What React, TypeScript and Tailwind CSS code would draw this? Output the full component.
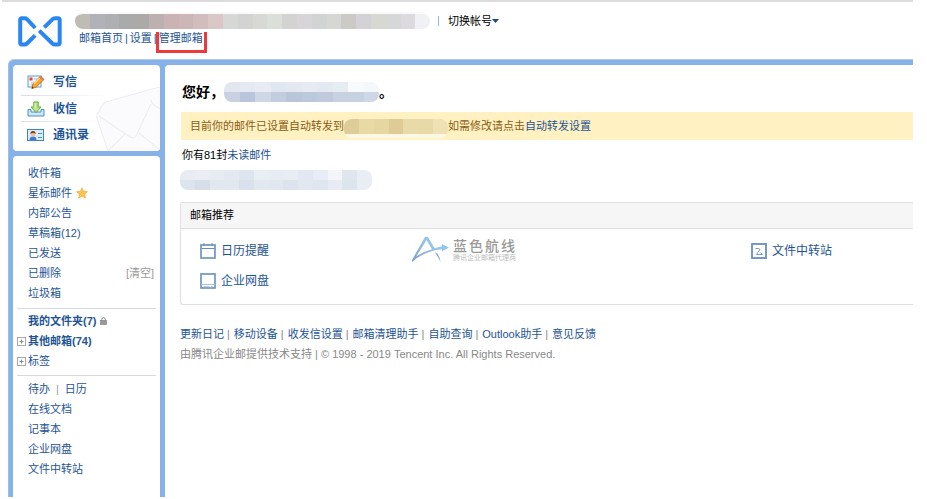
import type { ReactNode } from 'react';

interface LinkProps {
  children: ReactNode;
  className?: string;
}

function Link({ children, className = '' }: LinkProps) {
  return (
    <a href="#" className={`text-[#1e5494] hover:underline ${className}`}>
      {children}
    </a>
  );
}

// Each row of a mosaic is a list of cell colours
const ACCOUNT_CELLS = [
  '#bfbbb5', '#b1b2b7', '#adafb0', '#a9abaa', '#abaaa8', '#bcb0b1', '#cbb3b5', '#ccb6b8',
  '#d1bdbd', '#dbc7c6', '#d6d8d6', '#d3d3d2', '#d8d9d4', '#dcdeda', '#d3d3d2', '#d7d5d7',
  '#d2d4d4', '#d6d6d5', '#cbcac6', '#d3d3d7', '#d7d8d2', '#d5d8d7', '#dcdade', '#eff1f4',
];

const NAME_ROWS = [
  ['#e1e6ef', '#e5e9f1', '#e9ebf2', '#e1e7f0', '#e4e8f0', '#e6eaf2', '#e4e8f1', '#e5ecf2', '#f8fbfe', '#f5f8fb'],
  ['#c8d0e1', '#b8c5da', '#ced7e4', '#c2cde0', '#b9c5d9', '#bcc8dc', '#c0cadc', '#c7d1e0', '#c7d2e0', '#ced7e5'],
];

const UNREAD_ROWS = [
  ['#e8ebf2', '#eaeef4', '#e7ecf3', '#e4e9f1', '#dde5ee', '#e8eff2', '#e6ecf3', '#e8edf4', '#e3e7f1', '#e8ecf4', '#f4f5f8', '#dfe6ee', '#e8eef4'],
  ['#dce4ed', '#d7dee9', '#e2e7f0', '#e2e8f0', '#d9e2ec', '#e2e8f0', '#e1e6ef', '#dce3ed', '#e1e8f0', '#dfe6ef', '#e7ebf3', '#dce5ec', '#e9eef4'],
];

const FORWARD_ROWS = [
  ['#dfcd99', '#e9d9a5', '#e6d6a1', '#dfcb96', '#e9daaa', '#e8daa7', '#f0e1b4'],
  ['#fdf8e3'],
];

function Mosaic({ rows, rowClass, className = '' }: { rows: string[][]; rowClass: string; className?: string }) {
  return (
    <span aria-hidden="true" className={`block overflow-hidden ${className}`}>
      {rows.map((cells, r) => (
        <span key={r} className={`flex ${rowClass}`}>
          {cells.map((color, idx) => (
            <span key={idx} className="flex-1" style={{ background: color }} />
          ))}
        </span>
      ))}
    </span>
  );
}

function Logo() {
  return (
    <svg viewBox="0 0 44 31" className="h-[31px] w-11" fill="none" stroke="#2a86f3" strokeWidth="4" strokeLinejoin="round">
      <path d="M17.2 12 L9 3.2 Q8 2.3 6.5 2.3 H3.8 Q2.2 2.3 2.2 4 V26.8 Q2.2 28.5 3.8 28.5 H6.5 Q8 28.5 9 27.5 L17.2 19.4" />
      <path d="M21.2 14.6 L34.4 27.5 Q35.5 28.5 37 28.5 H40 Q41.7 28.5 41.7 26.8 V4 Q41.7 2.3 40 2.3 H37 Q35.5 2.3 34.4 3.3 L26.2 11.4" />
    </svg>
  );
}

function ComposeIcon() {
  return (
    <svg viewBox="0 0 18 16" className="h-4 w-[18px]">
      <rect x="1" y="2" width="13" height="11" fill="#f4faff" stroke="#5b9bd2" />
      <rect x="2.5" y="3.5" width="3" height="3" fill="#e8453a" />
      <path d="M7 5h4M4 9h3M4 11h2" stroke="#9cc3e6" />
      <path d="M13.5 2 L17 5.5 L8.8 13.4 L4.8 14.5 L6 10 Z" fill="#f7a52c" stroke="#b9651a" strokeWidth=".8" />
      <path d="M12.5 4 L7 9.8" stroke="#ffe08a" strokeWidth="1.4" />
      <path d="M13.5 2 L17 5.5 L15.6 6.8 L12.2 3.4Z" fill="#e5785b" />
      <path d="M4.8 14.5 L5.3 12.5 L6.8 14Z" fill="#5a3516" />
    </svg>
  );
}

function InboxIcon() {
  return (
    <svg viewBox="0 0 18 16" className="h-4 w-[18px]">
      <path d="M1 8.5 H4 V11 H14 V8.5 H17 V15 H1 Z" fill="#cfe6f8" stroke="#4a8fc7" />
      <path d="M6.8 1 H11.2 V6 H14 L9 11.5 L4 6 H6.8 Z" fill="#b9e486" stroke="#5fa83a" />
      <path d="M8 2.2 V7" stroke="#e6f8cb" />
    </svg>
  );
}

function ContactsIcon() {
  return (
    <svg viewBox="0 0 18 14" className="h-3.5 w-[18px]">
      <rect x=".5" y="1.5" width="16" height="11" fill="#dceefb" stroke="#3f83bf" />
      <path d="M2.5 12 Q2.5 8.6 6 8.6 Q9.5 8.6 9.5 12Z" fill="#3b7fd0" />
      <circle cx="6" cy="6" r="2.5" fill="#f3c193" />
      <path d="M3.4 6 Q3.2 3 6 3 Q8.8 3 8.6 6 Q7.6 4.8 6 4.9 Q4.4 4.8 3.4 6Z" fill="#7e3e1a" />
      <path d="M11 5.5h4M11 9.5h4" stroke="#4a8fc7" />
    </svg>
  );
}

function EnvelopeBackdrop() {
  return (
    <svg viewBox="0 0 64 64" className="absolute right-0 bottom-0 h-16 w-16" fill="none" stroke="#ebeef3" strokeWidth="1.2">
      <path d="M2 27 L6 17 L64 1 V64 H12 Z" fill="#fbfbfd" stroke="none" />
      <path d="M12 64 L1 31 Q0 28 3 25 Q5 18 10 15 L64 0" />
      <path d="M3 29 L34 50 Q38 52 40 49 L55 17" />
      <path d="M12 64 L29 47M64 63 L43 46M55 13 Q56 18 64 22" />
    </svg>
  );
}

function CalendarIcon() {
  return (
    <svg viewBox="0 0 16 16" className="size-4" fill="none" stroke="#6690bd">
      <rect x="1" y="2" width="14" height="13" strokeWidth="1.6" />
      <path d="M1 5.5h14M4 0v3M12 0v3" />
    </svg>
  );
}

function DriveIcon() {
  return (
    <svg viewBox="0 0 16 16" className="size-4" fill="none" stroke="#6690bd">
      <rect x="1" y="1" width="14" height="14" strokeWidth="1.6" />
      <path d="M1.5 11.5h13" stroke="#a9c1da" />
      <path d="M3.5 13.5h6M11 13.5h2" stroke="#b9cde2" />
    </svg>
  );
}

function TransferIcon() {
  return (
    <svg viewBox="0 0 16 16" className="size-4" fill="none" stroke="#6690bd">
      <rect x="1" y="1" width="14" height="14" strokeWidth="1.8" />
      <path d="M4.5 5.5h3L9 6.5 5.5 11.5h6M9.5 9.8l1.8 1.7" strokeWidth=".9" />
    </svg>
  );
}

function StarIcon() {
  return (
    <svg viewBox="0 0 12 12" className="size-3">
      <path d="M6 .8 L7.6 4.3 L11.4 4.7 L8.6 7.2 L9.4 11 L6 9.1 L2.6 11 L3.4 7.2 L.6 4.7 L4.4 4.3Z" fill="#fdc44c" stroke="#f0ac45" strokeWidth=".7" />
    </svg>
  );
}

function LockIcon() {
  return (
    <svg viewBox="0 0 7 8" className="h-2 w-[7px]">
      <path d="M1.8 4V2.4a1.7 1.7 0 0 1 3.4 0V4" fill="none" stroke="#888" />
      <rect x=".5" y="3.5" width="6" height="4" fill="#999" stroke="#777" strokeWidth=".6" />
    </svg>
  );
}

function ExpandButton({ label }: { label: string }) {
  return (
    <button type="button" aria-label={label} className="mr-[2px] flex size-[9px] items-center justify-center">
      <svg viewBox="0 0 9 9" className="size-[9px]" fill="none" stroke="#aaa">
        <rect x=".5" y=".5" width="8" height="8" />
        <path d="M2.5 4.5h4M4.5 2.5v4" stroke="#888" />
      </svg>
    </button>
  );
}

function Watermark() {
  return (
    <div className="absolute top-[33px] left-[230px] flex items-center gap-1">
      <svg viewBox="0 0 38 27" className="h-[27px] w-[38px]">
        <defs>
          <linearGradient id="sail" x1="0" y1="1" x2="1" y2="0">
            <stop offset="0" stopColor="#7d9bcb" />
            <stop offset=".6" stopColor="#94c5e8" />
            <stop offset="1" stopColor="#8ccbee" />
          </linearGradient>
        </defs>
        <path
          fill="url(#sail)"
          fillRule="evenodd"
          d="M1 26 V24 L14 1 H17 L23.5 12.3 Q27 10.8 31 10.4 V8 L38 11.6 L31 15.4 V13.2 Q14 14.5 1 26 Z M5.2 20.5 Q12 15.5 21 13.2 L15.5 4 Z"
        />
        <path d="M23.5 16 L26.5 17.5 Q29.5 22 29.5 26 Q27 20.5 23.5 16Z" fill="#92abd2" />
      </svg>
      <div className="text-[#999]">
        <p className="flex w-[62px] justify-between text-[14px] leading-[16px] font-medium">
          <span>蓝</span><span>色</span><span>航</span><span>线</span>
        </p>
        <p className="text-[7px] leading-[8px] text-[#bbb]">腾讯企业邮箱代理商</p>
      </div>
    </div>
  );
}

const FOLDERS = ['收件箱', '星标邮件', '内部公告', '草稿箱(12)', '已发送', '已删除', '垃圾箱'];
const TOOLS = ['在线文档', '记事本', '企业网盘', '文件中转站'];
const FOOTER_LINKS = ['更新日记', '移动设备', '收发信设置', '邮箱清理助手', '自助查询', 'Outlook助手', '意见反馈'];

const ACTIONS = [
  { label: '写信', icon: <ComposeIcon /> },
  { label: '收信', icon: <InboxIcon /> },
  { label: '通讯录', icon: <ContactsIcon /> },
];

function Header() {
  return (
    <header className="flex h-[57px] pl-[18px]">
      <div className="pt-[14px]">
        <Logo />
      </div>
      <div className="ml-[13px] pt-[10px]">
        <div className="flex items-center">
          <Mosaic rows={[ACCOUNT_CELLS]} rowClass="h-[15px]" className="w-[355px] rounded-lg border-t-2 border-[#fafafa]" />
          <span className="ml-2 h-[10px] w-px bg-[#8ebce6]" />
          <button type="button" className="ml-[9px] flex items-center text-black">
            切换帐号
            <svg viewBox="0 0 7 4" className="h-1 w-[7px]">
              <path d="M0 0h7L3.5 4z" fill="#1e4a80" />
            </svg>
          </button>
        </div>
        <nav className="flex gap-[2px] pl-1 leading-[18px] text-[#1e5494]">
          <Link>邮箱首页</Link>|<Link>设置</Link>|
          <span className="relative">
            <Link>管理邮箱</Link>
            <span className="absolute top-[3px] -right-1 -bottom-[6px] -left-[3px] border-[3px] border-t-0 border-[#f0383b]" />
          </span>
        </nav>
      </div>
    </header>
  );
}

function Sidebar() {
  return (
    <aside className="flex w-[147px] shrink-0 flex-col gap-[5px]">
      <div className="relative overflow-hidden rounded-[4px] bg-white py-1">
        <EnvelopeBackdrop />
        <ul className="relative">
          {ACTIONS.map((action, idx) => (
            <li key={action.label} className="h-[26px] pl-2">
              {idx > 0 && <div className="h-px w-[85px] bg-linear-to-r from-[#d5dce8] to-transparent" />}
              <a href="#" className="flex h-[25px] items-center gap-2 pl-[6px] text-[12px] font-bold text-[#1e5494]">
                {action.icon}
                {action.label}
              </a>
            </li>
          ))}
        </ul>
      </div>

      <nav className="flex-1 rounded-t-[4px] bg-white px-1 pt-[7px] leading-[20px]">
        <ul className="border-b border-[#d5dae0] pb-[5px] pl-[11px]">
          {FOLDERS.map((name) => (
            <li key={name} className="flex items-center pr-[2px]">
              <Link>{name}</Link>
              {name === '星标邮件' && <span className="ml-1"><StarIcon /></span>}
              {name === '已删除' && <a href="#" className="ml-auto text-[#999]">[清空]</a>}
            </li>
          ))}
        </ul>
        <ul className="border-b border-[#d5dae0] pt-[2px] pb-1">
          <li className="flex items-center gap-1 pl-[11px]">
            <Link className="font-bold">我的文件夹(7)</Link>
            <LockIcon />
          </li>
          <li className="flex items-center">
            <ExpandButton label="展开其他邮箱" />
            <Link className="font-bold">其他邮箱(74)</Link>
          </li>
          <li className="flex items-center">
            <ExpandButton label="展开标签" />
            <Link>标签</Link>
          </li>
        </ul>
        <ul className="pt-[3px] pl-[11px]">
          <li className="flex gap-[6px] text-[#999]">
            <Link>待办</Link>|<Link>日历</Link>
          </li>
          {TOOLS.map((name) => (
            <li key={name}><Link>{name}</Link></li>
          ))}
        </ul>
      </nav>
    </aside>
  );
}

function RecommendItem({ icon, label }: { icon: ReactNode; label: string }) {
  return (
    <a href="#" className="flex h-[30px] items-center gap-[5px] text-[12px] text-[#1e5494]">
      {icon}
      {label}
    </a>
  );
}

export default function App() {
  return (
    <div
      className="flex min-h-screen flex-col bg-white pr-[14px] text-[11px] leading-[16px] text-black"
      style={{ fontFamily: '"Liberation Sans", "Noto Sans CJK SC", sans-serif' }}
    >
      <div className="ml-[2px] h-[2px] bg-[#dcdcdc]" />
      <Header />

      <div className="mb-[2px] ml-2 flex flex-1 gap-[5px] rounded-tl-[6px] border-t border-l border-t-[#aecbed] border-l-[#9dc0ea] bg-[#87b2e7] pt-[5px] pl-1">
        <Sidebar />

        <main className="min-w-0 flex-1 rounded-tl-[4px] bg-white pt-[17px] pl-[15px]">
          <h1 className="flex h-5 items-center pl-[2px] text-[14px] font-bold">
            您好，
            <Mosaic rows={NAME_ROWS} rowClass="h-[10px]" className="w-[155px] rounded-lg" />
            。
          </h1>

          <div className="mt-[10px] ml-px flex h-7 items-center bg-[#fff1c1] pl-[9px] text-[#8a5b12]">
            目前你的邮件已设置自动转发到
            <Mosaic rows={FORWARD_ROWS} rowClass="h-[15px] last:h-1" className="mt-1 w-[104px] rounded-lg" />
            如需修改请点击
            <Link>自动转发设置</Link>
          </div>

          <p className="mt-[7px] pl-[2px]">
            你有81封<Link>未读邮件</Link>
          </p>
          <Mosaic rows={UNREAD_ROWS} rowClass="h-[10px]" className="mt-[7px] w-[192px] rounded-lg" />

          <section className="relative mt-3 rounded-l-[3px] border border-r-0 border-[#e0e0e0]">
            <h2 className="border-b border-[#e0e0e0] bg-[#f6f6f6] pl-[9px] leading-[25px]">邮箱推荐</h2>
            <div className="grid grid-cols-[17fr_17fr_10fr] pt-[7px] pb-2 pl-[19px]">
              <div>
                <RecommendItem icon={<CalendarIcon />} label="日历提醒" />
                <RecommendItem icon={<DriveIcon />} label="企业网盘" />
              </div>
              <div className="col-start-3">
                <RecommendItem icon={<TransferIcon />} label="文件中转站" />
              </div>
            </div>
            <Watermark />
          </section>

          <footer className="mt-[19px] text-[#888]">
            <ul className="flex flex-wrap leading-[20px]">
              {FOOTER_LINKS.map((name, idx) => (
                <li key={name}>
                  {idx > 0 && <span className="pr-1 pl-[3px]">|</span>}
                  <Link>{name}</Link>
                </li>
              ))}
            </ul>
            <p className="leading-[20px]">由腾讯企业邮提供技术支持 | © 1998 - 2019 Tencent Inc. All Rights Reserved.</p>
          </footer>
        </main>
      </div>
    </div>
  );
}
